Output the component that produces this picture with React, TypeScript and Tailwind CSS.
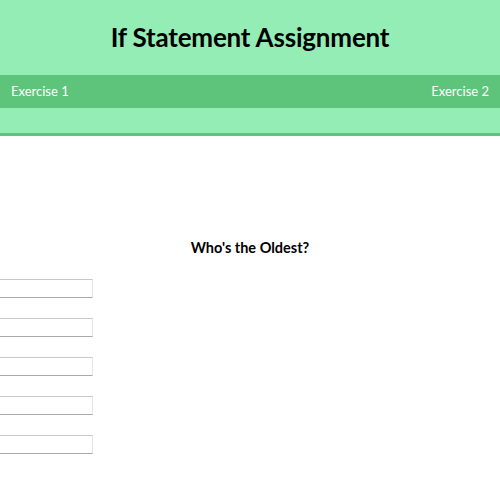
const fields = [0, 1, 2, 3, 4];

export default function App() {
  return (
    <div className="min-h-[500px] bg-white font-['Lato',sans-serif]">
      <header className="bg-[#95edb6] border-b-[3px] border-[#5ec47c]">
        <h1 className="h-[75px] flex items-center justify-center text-[26px] font-bold text-black tracking-[-0.2px]">
          If Statement Assignment
        </h1>
        <nav className="h-[33px] bg-[#5ec47c] flex items-center justify-between px-[11px] text-white text-[13px]">
          <span>Exercise 1</span>
          <span>Exercise 2</span>
        </nav>
        <div className="h-[25px]" />
      </header>

      <main className="pt-[103px]">
        <h2 className="text-center text-[14.5px] font-bold text-black leading-[18px]">
          Who's the Oldest?
        </h2>
        <div className="mt-[22px] flex flex-col gap-[20px]">
          {fields.map((i) => (
            <input
              key={i}
              type="text"
              className="block w-[93px] h-[19px] bg-white border-t border-b border-r border-l-0 border-t-[#c8c8c8] border-b-[#a9a9a9] border-r-[#e6e6e6] outline-none"
            />
          ))}
        </div>
      </main>
    </div>
  );
}
